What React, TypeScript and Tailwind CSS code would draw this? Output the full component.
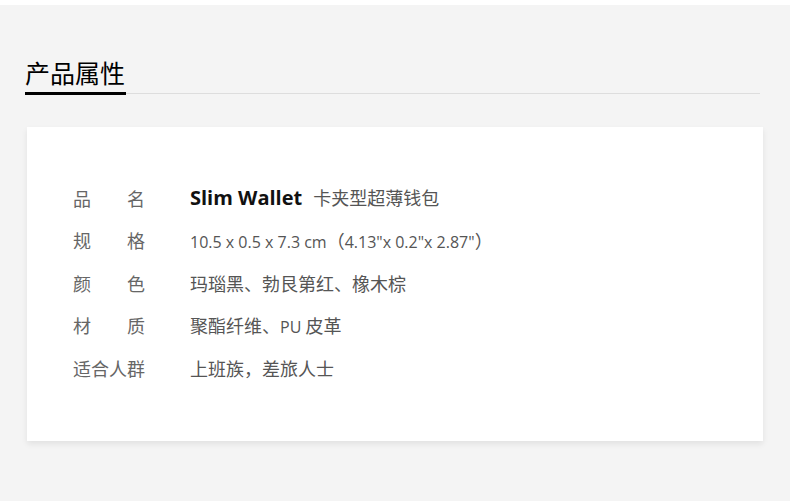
import React from "react";

const cjk = "font-['Noto_Sans_CJK_SC',sans-serif]";
const lat = "font-['Open_Sans','Noto_Sans_CJK_SC',sans-serif] text-[16px]";

function Label({ chars }: { chars: string[] }) {
  return (
    <div className="flex w-[72px] justify-between text-[#666]">
      {chars.map((c, i) => (
        <span key={i}>{c}</span>
      ))}
    </div>
  );
}

function Row({ label, children }: { label: string[]; children: React.ReactNode }) {
  return (
    <div className="flex h-[42.5px] items-center">
      <Label chars={label} />
      <div className="ml-[45px] flex items-baseline text-[#555]">{children}</div>
    </div>
  );
}

export default function App() {
  return (
    <div className={`w-[790px] min-h-[501px] bg-[#f4f4f4] ${cjk} text-[18px]`}>
      <div className="h-[5px] bg-white" />
      <div className="ml-[25px] mr-[30px] mt-[52px] flex items-end">
        <div className="flex flex-col">
          <div className="text-[25px] leading-[30px] text-black font-normal">产品属性</div>
          <div className="mt-[5px] h-[3px] w-[101px] bg-black" />
        </div>
        <div className="mb-[1px] h-px flex-1 bg-[#dddddd]" />
      </div>
      <div className="ml-[27px] mt-[32px] w-[736px] bg-white pt-[50px] pb-[51px] pl-[46px] shadow-[0_3px_6px_rgba(0,0,0,0.08)]">
        <Row label={["品", "名"]}>
          <span className="font-['Open_Sans',sans-serif] text-[20px] font-bold text-[#111]">Slim Wallet</span>
          <span className="ml-[11px]">卡夹型超薄钱包</span>
        </Row>
        <Row label={["规", "格"]}>
          <span className={lat}>10.5 x 0.5 x 7.3 cm</span>
          <span>（</span>
          <span className={lat}>4.13"x 0.2"x 2.87"</span>
          <span>）</span>
        </Row>
        <Row label={["颜", "色"]}>
          <span>玛瑙黑、勃艮第红、橡木棕</span>
        </Row>
        <Row label={["材", "质"]}>
          <span>聚酯纤维、</span>
          <span className={lat}>PU&nbsp;</span>
          <span>皮革</span>
        </Row>
        <Row label={["适", "合", "人", "群"]}>
          <span>上班族，差旅人士</span>
        </Row>
      </div>
    </div>
  );
}
